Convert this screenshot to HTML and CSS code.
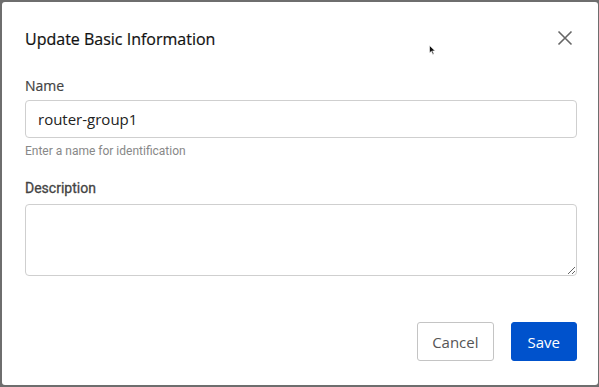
FILE: index.html
```html
<!DOCTYPE html>
<html>
  <head>
    <meta charset="utf-8">
    <title>Update Basic Information</title>
    <link rel="stylesheet" href="styles.css">
  </head>
  <body>
    <div class="modal">
      <div class="modal-head">
        <h2 class="title">Update Basic Information</h2>
        <button class="close" type="button" aria-label="Close">
          <svg width="16" height="16" viewBox="0 0 16 16">
            <path d="M1.5 1.5 L14.5 14.5 M14.5 1.5 L1.5 14.5" stroke="#666" stroke-width="1.6" fill="none"/>
          </svg>
        </button>
      </div>
      <label class="label" for="name">Name</label>
      <input class="field" id="name" type="text" value="router-group1">
      <p class="hint">Enter a name for identification</p>
      <label class="label label-desc" for="desc">Description</label>
      <textarea class="field area" id="desc"></textarea>
      <div class="actions">
        <button class="btn btn-cancel" type="button">Cancel</button>
        <button class="btn btn-save" type="button">Save</button>
      </div>
      <svg class="pointer" width="8" height="11" viewBox="0 0 8 11">
        <path d="M0.5 0.5 L0.5 8 L2.4 6.3 L3.8 9.6 L5 9.1 L3.6 5.9 L6.2 5.9 Z" fill="#111" stroke="#fff" stroke-width="0.6"/>
      </svg>
    </div>
  </body>
</html>
```

FILE: styles.css
```css
* {
box-sizing: border-box;
}
html, body {
margin: 0;
height: 100%;
}
body {
background: #6e6e6e;
padding: 2px 1px 2px 2px;
font-family: "Open Sans", sans-serif;
}
.modal {
position: relative;
background: #fff;
border-radius: 3px;
height: 100%;
padding: 25px 21px 0 23px;
display: flex;
flex-direction: column;
}
.modal-head {
display: flex;
align-items: center;
justify-content: space-between;
height: 24px;
margin-bottom: 25px;
}
.title {
margin: 0;
font-size: 16px;
font-weight: 500;
line-height: 24px;
color: #111;
-webkit-text-stroke: 0.2px #111;
}
.close {
border: 0;
background: none;
padding: 0;
width: 16px;
height: 16px;
margin-right: 4px;
margin-top: -2px;
cursor: pointer;
}
.label {
display: block;
font-size: 14px;
font-weight: 500;
line-height: 20px;
color: #444;
-webkit-text-stroke: 0.2px #444;
margin-bottom: 4px;
}
.label-desc {
font-family: Roboto, sans-serif;
font-weight: 400;
-webkit-text-stroke: 0.3px #444;
margin-bottom: 6px;
}
.field {
display: block;
width: 100%;
height: 38px;
border: 1px solid #cfcfcf;
border-radius: 4px;
padding: 0 12px;
font-family: "Open Sans", sans-serif;
font-size: 15px;
color: #222;
outline: none;
}
.area {
height: 72px;
padding: 8px 12px;
}
.hint {
margin: 5px 0 19px;
font-family: Roboto, sans-serif;
font-size: 12px;
line-height: 16px;
color: #888;
}
.actions {
display: flex;
justify-content: flex-end;
gap: 17px;
margin-top: 46px;
}
.btn {
height: 39px;
border-radius: 3px;
font-family: "Open Sans", sans-serif;
font-size: 15px;
padding: 0 14px;
cursor: pointer;
}
.btn-cancel {
background: #fff;
border: 1px solid #c4c4c4;
color: #555;
}
.btn-save {
background: #0052cc;
border: 1px solid #0052cc;
color: #fff;
padding: 0 16px;
}
.pointer {
position: absolute;
left: 427px;
top: 43px;
}
```
